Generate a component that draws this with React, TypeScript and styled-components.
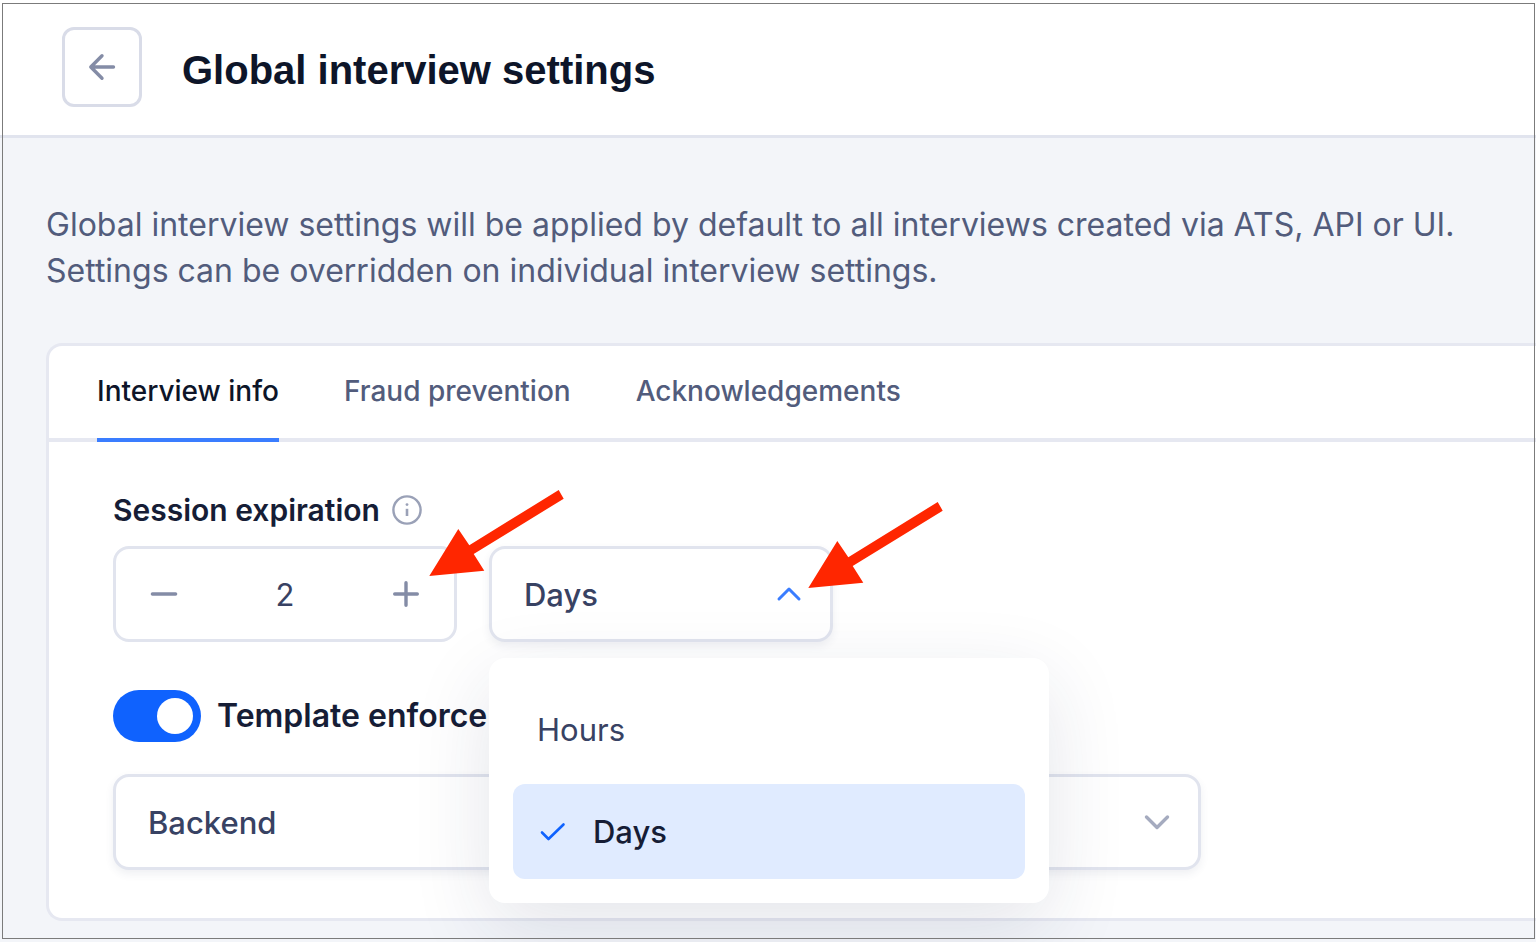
import React, { useState } from "react";
import styled, { createGlobalStyle } from "styled-components";

const color = {
  ink: "#0d1529",
  heading: "#161d36",
  text: "#384263",
  muted: "#525c7c",
  icon: "#848ca6",
  iconSoft: "#a5abbf",
  line: "#e1e4ee",
  cardLine: "#e6e8f1",
  page: "#f3f5f9",
  blue: "#0f62fe",
  blueLine: "#3a7dff",
  selected: "#e0ebff",
  red: "#ff2600",
};

const GlobalStyle = createGlobalStyle`
  *, *::before, *::after { box-sizing: border-box; }
  body {
    margin: 0;
    background: ${color.page};
    font-family: Inter, "Liberation Sans", sans-serif;
    font-size: 31px;
    color: ${color.text};
  }
  button, input, select { font: inherit; color: inherit; }
`;

const Page = styled.div`
  position: relative;
  min-height: 100vh;
  overflow: hidden;
`;

const Frame = styled.div`
  position: absolute;
  inset: 3px 1px 3px 2px;
  border: 1px solid #7b7b7b;
  pointer-events: none;
  z-index: 5;
`;

const Header = styled.header`
  display: flex;
  align-items: center;
  gap: 40px;
  padding: 27px 62px 28px;
  background: #fff;
  border-bottom: 3px solid ${color.line};
`;

const BackButton = styled.button`
  display: grid;
  place-items: center;
  width: 80px;
  height: 80px;
  padding: 0;
  background: #fff;
  border: 3px solid #d9dce8;
  border-radius: 12px;
`;

const Title = styled.h1`
  margin: 0;
  padding-top: 6px;
  font-family: "Liberation Sans", Arial, sans-serif;
  font-size: 40px;
  line-height: 48px;
  font-weight: 700;
  color: ${color.ink};
`;

const Main = styled.main`
  padding: 64px 0 21px 46px;
`;

const Intro = styled.p`
  margin: 0 0 49px;
  font-size: 32px;
  line-height: 46px;
  color: ${color.muted};
`;

const Card = styled.section`
  background: #fff;
  border: 3px solid ${color.cardLine};
  border-right: 0;
  border-radius: 16px 0 0 16px;
`;

const Tabs = styled.nav`
  display: flex;
  gap: 65px;
  padding: 0 48px;
  box-shadow: inset 0 -4px ${color.cardLine};
`;

const Tab = styled.button<{ $active?: boolean }>`
  height: 96px;
  padding: 0 0 2px;
  background: none;
  border: 0;
  border-bottom: 4px solid ${(p) => (p.$active ? color.blueLine : "transparent")};
  font-size: 28px;
  font-weight: 500;
  color: ${(p) => (p.$active ? color.ink : color.muted)};
`;

const CardBody = styled.div`
  padding: 48px 64px;
`;

const LabelRow = styled.div`
  display: flex;
  align-items: center;
  gap: 12px;
  height: 40px;
  margin-bottom: 16px;
`;

const Label = styled.label<{ $large?: boolean }>`
  font-size: ${(p) => (p.$large ? 32 : 30)}px;
  line-height: 40px;
  font-weight: 600;
  color: ${color.heading};
`;

const InfoButton = styled.button`
  display: grid;
  padding: 0;
  background: none;
  border: 0;
`;

const FieldRow = styled.div`
  display: flex;
  gap: 32px;
`;

const Field = styled.div<{ $width: number }>`
  position: relative;
  flex: 0 1 ${(p) => p.$width}px;
  max-width: ${(p) => p.$width}px;
`;

const Stepper = styled.div`
  display: grid;
  grid-template-columns: 96px 1fr 96px;
  height: 96px;
  background: #fff;
  border: 3px solid ${color.line};
  border-radius: 16px;
`;

const StepButton = styled.button`
  display: grid;
  place-items: center;
  padding: 0;
  background: none;
  border: 0;
`;

const StepInput = styled.input`
  width: 100%;
  padding: 0;
  background: none;
  border: 0;
  text-align: center;
`;

const SelectBox = styled.div`
  display: grid;
  align-items: center;

  > * { grid-area: 1 / 1; }
  > svg {
    justify-self: end;
    margin-right: 28px;
    pointer-events: none;
  }
`;

const Select = styled.select`
  appearance: none;
  width: 100%;
  height: 96px;
  padding: 0 80px 0 32px;
  background: #fff;
  border: 3px solid ${color.line};
  border-radius: 16px;
  box-shadow: 0 4px 8px rgba(56, 66, 99, 0.08);
  font-weight: 500;
`;

const Menu = styled.ul`
  position: absolute;
  top: 112px;
  left: 0;
  z-index: 2;
  display: grid;
  gap: 7px;
  width: 560px;
  margin: 0;
  padding: 24px;
  list-style: none;
  background: #fff;
  border-radius: 16px;
  box-shadow: 0 24px 80px rgba(30, 40, 80, 0.12);
`;

const Option = styled.button<{ $selected: boolean }>`
  display: flex;
  align-items: center;
  gap: 24px;
  width: 100%;
  height: 95px;
  padding: 0 24px;
  border: 0;
  border-radius: 12px;
  text-align: left;
  background: ${(p) => (p.$selected ? color.selected : "#fff")};
  color: ${(p) => (p.$selected ? color.heading : color.text)};
  font-weight: ${(p) => (p.$selected ? 500 : 400)};
`;

const Pointer = styled.svg<{ $left: number; $top: number }>`
  position: absolute;
  left: ${(p) => p.$left}px;
  top: ${(p) => p.$top}px;
  z-index: 3;
  pointer-events: none;
`;

const SwitchRow = styled.div`
  display: flex;
  align-items: center;
  gap: 16px;
  margin: 48px 0 32px;
`;

const Switch = styled.input`
  appearance: none;
  display: flex;
  align-items: center;
  flex: none;
  width: 88px;
  height: 52px;
  margin: 0;
  padding: 0 8px;
  border-radius: 26px;
  background: ${color.icon};

  &::before {
    content: "";
    width: 36px;
    height: 36px;
    border-radius: 50%;
    background: #fff;
  }
  &:checked {
    justify-content: flex-end;
    background: ${color.blue};
  }
`;

const Glyph = ({ d, tone = color.icon, weight = 3.4 }: { d: string; tone?: string; weight?: number }) => (
  <svg width="32" height="32" viewBox="0 0 32 32" aria-hidden="true">
    <path d={d} fill="none" stroke={tone} strokeWidth={weight} strokeLinecap="round" strokeLinejoin="round" />
  </svg>
);

const InfoIcon = () => (
  <svg width="30" height="30" viewBox="0 0 30 30" aria-hidden="true">
    <circle cx="15" cy="15" r="13.6" fill="none" stroke="#9aa1b7" strokeWidth="2.4" />
    <circle cx="15" cy="9.6" r="1.4" fill="#9aa1b7" />
    <path d="M15 13.8v7.200" stroke="#9aa1b7" strokeWidth="2.6" />
  </svg>
);

const ArrowPointer = ({ left, top }: { left: number; top: number }) => (
  <Pointer $left={left} $top={top} width="136" height="88" viewBox="0 0 136 88" aria-hidden="true">
    <path
      fill={color.red}
      d="M.3 86 29.3 39 40.3 55.3 129.7 0 134.7 8.7 44.7 64 55.3 80.7Z"
    />
  </Pointer>
);

const tabs = ["Interview info", "Fraud prevention", "Acknowledgements"];
const units = ["Hours", "Days"];

export default function App() {
  const [tab, setTab] = useState(tabs[0]);
  const [count, setCount] = useState(2);
  const [unit, setUnit] = useState("Days");

  return (
    <Page>
      <GlobalStyle />
      <Header>
        <BackButton type="button" aria-label="Back">
          <Glyph d="M27.500 16H5M16 4.800 4.800 16 16 27.200" />
        </BackButton>
        <Title>Global interview settings</Title>
      </Header>
      <Main>
        <Intro>
          Global interview settings will be applied by default to all interviews created via ATS, API or UI.
          <br />
          Settings can be overridden on individual interview settings.
        </Intro>
        <Card>
          <Tabs>
            {tabs.map((name) => (
              <Tab key={name} type="button" $active={name === tab} onClick={() => setTab(name)}>
                {name}
              </Tab>
            ))}
          </Tabs>
          <CardBody>
            <LabelRow>
              <Label htmlFor="expiration">Session expiration</Label>
              <InfoButton type="button" aria-label="About session expiration">
                <InfoIcon />
              </InfoButton>
            </LabelRow>
            <FieldRow>
              <Field $width={344}>
                <Stepper>
                  <StepButton type="button" aria-label="Decrease" onClick={() => setCount(Math.max(1, count - 1))}>
                    <Glyph d="M4.400 16h23.200" />
                  </StepButton>
                  <StepInput
                    id="expiration"
                    inputMode="numeric"
                    value={count}
                    onChange={(e) => setCount(Number(e.target.value) || 1)}
                  />
                  <StepButton type="button" aria-label="Increase" onClick={() => setCount(count + 1)}>
                    <Glyph d="M4.700 16h22.600M16 4.700v22.600" />
                  </StepButton>
                </Stepper>
                <ArrowPointer left={316} top={-56} />
              </Field>
              <Field $width={344}>
                <SelectBox>
                  <Select aria-label="Expiration unit" value={unit} onChange={(e) => setUnit(e.target.value)}>
                    {units.map((name) => (
                      <option key={name}>{name}</option>
                    ))}
                  </Select>
                  <Glyph d="M6 21 16 11 26 21" tone={color.blueLine} weight={3} />
                </SelectBox>
                <Menu>
                  {units.map((name) => (
                    <li key={name}>
                      <Option type="button" $selected={name === unit} onClick={() => setUnit(name)}>
                        {name === unit && <Glyph d="M5 16.500 11.500 23 26.500 8.500" tone={color.blue} weight={2.6} />}
                        {name}
                      </Option>
                    </li>
                  ))}
                </Menu>
                <ArrowPointer left={319} top={-44} />
              </Field>
            </FieldRow>
            <SwitchRow>
              <Switch id="template" type="checkbox" role="switch" defaultChecked />
              <Label $large htmlFor="template">Template enforce</Label>
            </SwitchRow>
            <Field $width={1088}>
              <SelectBox>
                <Select aria-label="Template">
                  <option>Backend</option>
                </Select>
                <Glyph d="M5.500 11 16 21.500 26.500 11" tone={color.iconSoft} />
              </SelectBox>
            </Field>
          </CardBody>
        </Card>
      </Main>
      <Frame />
    </Page>
  );
}
